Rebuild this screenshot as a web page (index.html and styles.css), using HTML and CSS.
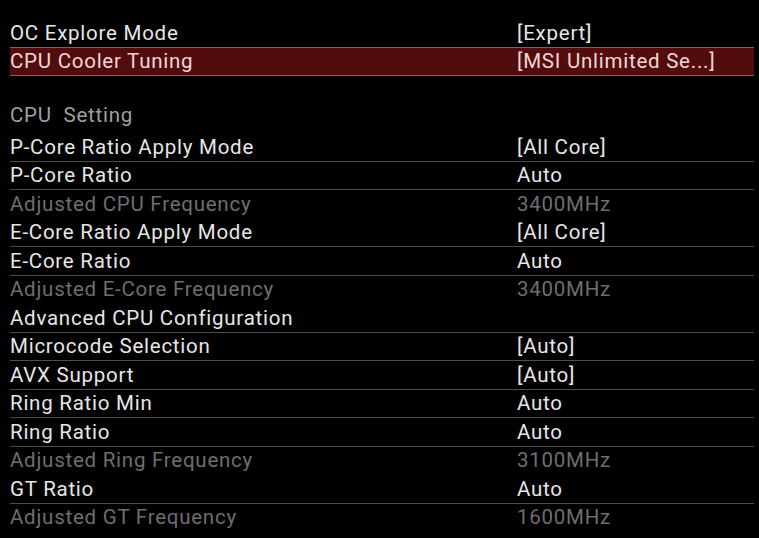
FILE: index.html
```html
<!DOCTYPE html>
<html>
<head>
<meta charset="utf-8">
<link rel="stylesheet" href="styles.css">
</head>
<body>
<div class="menu">
  <div class="row"><span class="label">OC Explore Mode</span><span class="value">[Expert]</span></div>
  <div class="row sel"><span class="label">CPU Cooler Tuning</span><span class="value">[MSI Unlimited Se...]</span></div>
  <div class="section">CPU&nbsp; Setting</div>
  <div class="row"><span class="label">P-Core Ratio Apply Mode</span><span class="value">[All Core]</span></div>
  <div class="row"><span class="label">P-Core Ratio</span><span class="value">Auto</span></div>
  <div class="row dim"><span class="label">Adjusted CPU Frequency</span><span class="value">3400MHz</span></div>
  <div class="row"><span class="label">E-Core Ratio Apply Mode</span><span class="value">[All Core]</span></div>
  <div class="row"><span class="label">E-Core Ratio</span><span class="value">Auto</span></div>
  <div class="row dim"><span class="label">Adjusted E-Core Frequency</span><span class="value">3400MHz</span></div>
  <div class="row"><span class="label">Advanced CPU Configuration</span><span class="value"></span></div>
  <div class="row"><span class="label">Microcode Selection</span><span class="value">[Auto]</span></div>
  <div class="row"><span class="label">AVX Support</span><span class="value">[Auto]</span></div>
  <div class="row"><span class="label">Ring Ratio Min</span><span class="value">Auto</span></div>
  <div class="row"><span class="label">Ring Ratio</span><span class="value">Auto</span></div>
  <div class="row dim"><span class="label">Adjusted Ring Frequency</span><span class="value">3100MHz</span></div>
  <div class="row"><span class="label">GT Ratio</span><span class="value">Auto</span></div>
  <div class="row dim"><span class="label">Adjusted GT Frequency</span><span class="value">1600MHz</span></div>
</div>
</body>
</html>
```
FILE: styles.css
```css
html, body {
  margin: 0;
  padding: 0;
  background: #000;
  height: 538px;
  overflow: hidden;
}
.menu {
  padding: 19px 5px 0 10px;
  font-family: Roboto, "Liberation Sans", sans-serif;
  font-size: 20.5px;
  letter-spacing: 0.75px;
  color: #e6e6e6;
}
.row {
  display: flex;
  align-items: center;
  height: 28.5px;
  box-sizing: border-box;
  border-bottom: 1px solid #4d4d4d;
}
.row.dim {
  border-bottom-color: transparent;
  color: #6e6e6e;
}
.row.sel {
  background: #530c0e;
  color: #f2d6d6;
  border-top: 1px solid #6a6a6a;
  border-bottom: 1px solid #6a6a6a;
  margin-top: -1px;
  height: 29.5px;
}
.label {
  width: 507px;
  flex: none;
  white-space: nowrap;
}
.value {
  white-space: nowrap;
}
.section {
  height: 57px;
  display: flex;
  align-items: center;
  color: #a0a0a0;
  padding-top: 20px;
  box-sizing: border-box;
}
```
